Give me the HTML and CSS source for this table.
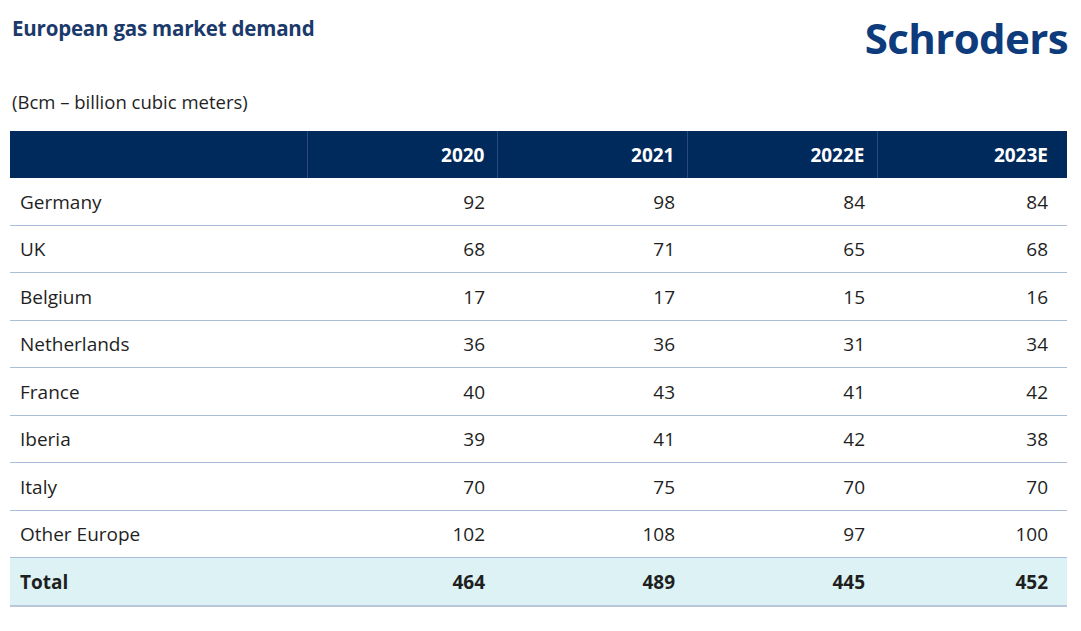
FILE: index.html
```html
<!DOCTYPE html>
<html lang="en">
<head>
<meta charset="utf-8">
<title>European gas market demand</title>
<link rel="stylesheet" href="styles.css">
</head>
<body>
<div class="page">
  <header class="top">
    <h1 class="title">European gas market demand</h1>
    <div class="logo">Schroders</div>
  </header>
  <p class="unit">(Bcm – billion cubic meters)</p>
  <table class="data">
    <colgroup>
      <col class="c-label"><col class="c-num"><col class="c-num"><col class="c-num"><col class="c-num">
    </colgroup>
    <thead>
      <tr><th></th><th>2020</th><th>2021</th><th>2022E</th><th>2023E</th></tr>
    </thead>
    <tbody>
      <tr><td>Germany</td><td>92</td><td>98</td><td>84</td><td>84</td></tr>
      <tr><td>UK</td><td>68</td><td>71</td><td>65</td><td>68</td></tr>
      <tr><td>Belgium</td><td>17</td><td>17</td><td>15</td><td>16</td></tr>
      <tr><td>Netherlands</td><td>36</td><td>36</td><td>31</td><td>34</td></tr>
      <tr><td>France</td><td>40</td><td>43</td><td>41</td><td>42</td></tr>
      <tr><td>Iberia</td><td>39</td><td>41</td><td>42</td><td>38</td></tr>
      <tr><td>Italy</td><td>70</td><td>75</td><td>70</td><td>70</td></tr>
      <tr><td>Other Europe</td><td>102</td><td>108</td><td>97</td><td>100</td></tr>
      <tr class="total"><td>Total</td><td>464</td><td>489</td><td>445</td><td>452</td></tr>
    </tbody>
  </table>
</div>
</body>
</html>
```
FILE: styles.css
```css
html, body {
  margin: 0;
  padding: 0;
  background: #ffffff;
}
body {
  font-family: "Open Sans", "Noto Sans", sans-serif;
  color: #1f1f1f;
}
.page {
  padding: 0 13px 0 10px;
}
.top {
  display: flex;
  justify-content: space-between;
  align-items: flex-start;
}
.title {
  margin: 15px 0 0 2px;
  font-size: 20.5px;
  line-height: 26px;
  font-weight: 700;
  color: #1b3a6b;
  letter-spacing: -0.2px;
}
.logo {
  margin: 10px 0 0 0;
  font-family: "Open Sans", sans-serif;
  font-weight: 700;
  font-size: 42px;
  line-height: 56px;
  letter-spacing: -0.6px;
  color: #0d3b7c;
}
.unit {
  margin: 23px 0 0 2px;
  font-size: 18.5px;
  line-height: 26px;
  color: #1f1f1f;
}
.data {
  margin-top: 16px;
  width: 1057px;
  border-collapse: collapse;
  table-layout: fixed;
  font-size: 19px;
}
.c-label { width: 297px; }
.c-num { width: 190px; }
.data th {
  background: #002a5c;
  color: #ffffff;
  font-weight: 700;
  font-size: 19px;
  text-align: right;
  height: 47px;
  padding: 0 12px 0 10px;
  border-left: 1px solid #2a4a78;
}
.data th:first-child { border-left: none; }
.data td {
  height: 45.5px;
  padding: 1px 12px 0 10px;
  text-align: right;
  border-bottom: 1px solid #a9bdd6;
}
.data td:first-child {
  text-align: left;
}
.data th:last-child, .data td:last-child {
  padding-right: 19px;
}
.data tr.total td {
  background: #dcf2f4;
  font-weight: 700;
  border-bottom: 2px solid #b8c8da;
}
```
